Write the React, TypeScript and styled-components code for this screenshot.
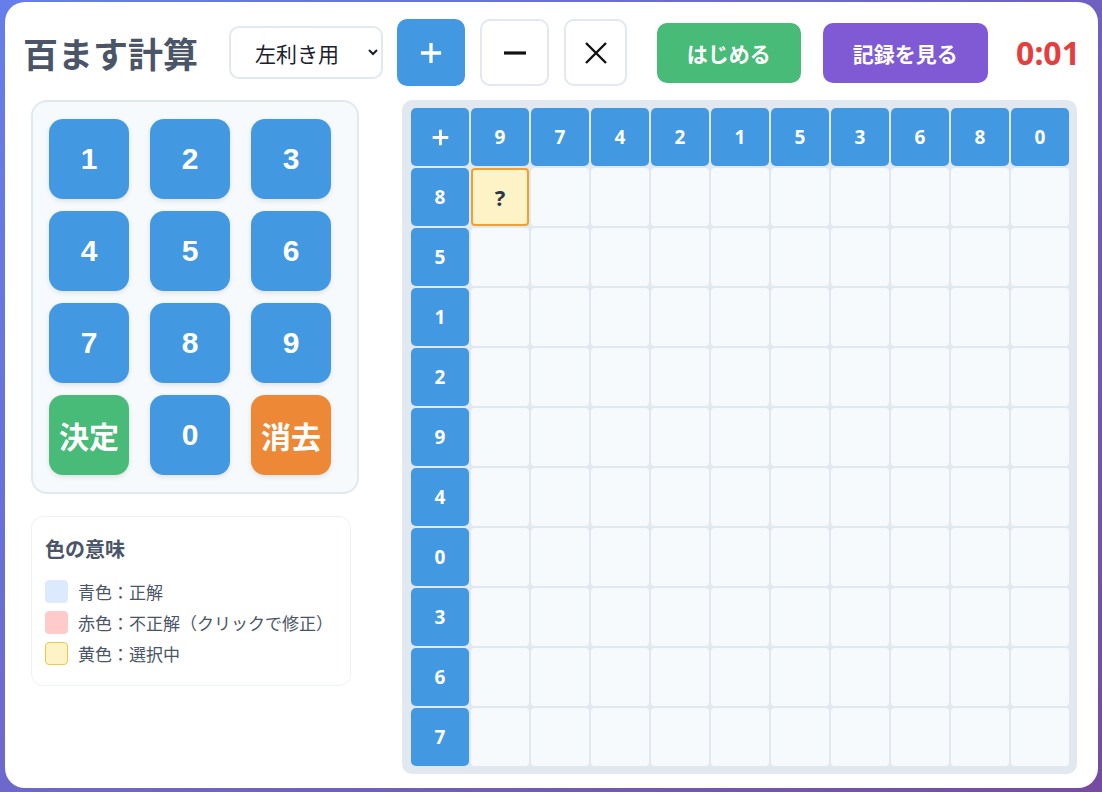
import { Fragment } from 'react';
import styled, { createGlobalStyle } from 'styled-components';

const GlobalStyle = createGlobalStyle`
  html, body {
    margin: 0;
    padding: 0;
  }
  body {
    background: linear-gradient(135deg, #667eea 0%, #764ba2 100%);
    font-family: 'Noto Sans CJK JP', 'Noto Sans', sans-serif;
    height: 792px;
    overflow: hidden;
  }
`;

const blue = '#4299e1';
const border = '#e2e8f0';
const textColor = '#4a5568';

const Page = styled.div`
  padding: 2px 4px 4px 5px;
  box-sizing: border-box;
  height: 792px;
`;

const Card = styled.div`
  background: #ffffff;
  border-radius: 20px;
  height: 100%;
  box-sizing: border-box;
  padding: 17px 18px 0 18px;
`;

const Header = styled.header`
  display: flex;
  align-items: center;
  height: 67px;
`;

const Title = styled.h1`
  margin: 0 31px 0 0;
  font-size: 35px;
  font-weight: 700;
  color: ${textColor};
  line-height: 1;
  white-space: nowrap;
`;

const Select = styled.select`
  width: 154px;
  height: 53px;
  border: 2px solid ${border};
  border-radius: 10px;
  background: #fff;
  font-family: 'Noto Sans CJK JP', sans-serif;
  font-size: 21px;
  color: #1a202c;
  padding: 0 12px 0 20px;
  margin-right: 14px;
`;

const OpButton = styled.button<{ $active?: boolean; $width: number }>`
  width: ${(p) => p.$width}px;
  height: 67px;
  margin-right: 15px;
  border-radius: 10px;
  border: 2px solid ${(p) => (p.$active ? blue : border)};
  background: ${(p) => (p.$active ? blue : '#fff')};
  color: ${(p) => (p.$active ? '#fff' : '#111')};
  display: flex;
  align-items: center;
  justify-content: center;
  padding: 0;
`;

const ActionButton = styled.button<{ $color: string; $gap: number; $width: number }>`
  width: ${(p) => p.$width}px;
  height: 60px;
  padding: 0;
  border: none;
  border-radius: 10px;
  background: ${(p) => p.$color};
  color: #fff;
  font-family: 'Noto Sans CJK JP', sans-serif;
  font-size: 21px;
  font-weight: 700;
  margin-left: ${(p) => p.$gap}px;
`;

const Timer = styled.div`
  margin-left: 28px;
  font-family: 'Noto Sans', sans-serif;
  font-size: 32px;
  font-weight: 700;
  color: #e53e3e;
`;

const Main = styled.main`
  display: flex;
  margin-top: 14px;
  padding-left: 8px;
`;

const Side = styled.div`
  width: 328px;
  display: flex;
  flex-direction: column;
  gap: 22px;
  margin-right: 43px;
`;

const Keypad = styled.div`
  background: #f7fafc;
  border: 2px solid ${border};
  border-radius: 16px;
  padding: 17px 16px 17px 16px;
  display: grid;
  grid-template-columns: repeat(3, 80px);
  column-gap: 21px;
  row-gap: 12px;
`;

const Key = styled.button<{ $color?: string }>`
  width: 80px;
  height: 80px;
  border: none;
  border-radius: 14px;
  background: ${(p) => p.$color || blue};
  color: #fff;
  font-family: 'Liberation Sans', 'Noto Sans CJK JP', sans-serif;
  font-size: 30px;
  font-weight: 700;
  box-shadow: 0 2px 5px rgba(0, 0, 0, 0.1);
  padding: 0;
`;

const Legend = styled.div`
  width: 320px;
  box-sizing: border-box;
  border: 1px solid #edf2f7;
  border-radius: 12px;
  padding: 17px 13px 16px;
`;

const LegendTitle = styled.h3`
  margin: 0 0 13px;
  font-size: 20px;
  font-weight: 700;
  color: ${textColor};
`;

const LegendRow = styled.div`
  display: flex;
  align-items: center;
  gap: 10px;
  height: 31px;
  font-size: 17px;
  color: ${textColor};
`;

const Swatch = styled.span<{ $bg: string; $border: string }>`
  width: 23px;
  height: 23px;
  border-radius: 4px;
  background: ${(p) => p.$bg};
  border: 1px solid ${(p) => p.$border};
  box-sizing: border-box;
`;

const Board = styled.div`
  background: ${border};
  border-radius: 10px;
  padding: 8px 8px 8px 9px;
  display: grid;
  grid-template-columns: repeat(11, 58px);
  grid-auto-rows: 58px;
  gap: 2px;
`;

const HeadCell = styled.div`
  background: ${blue};
  border-radius: 5px;
  color: #fff;
  font-family: 'Noto Sans', sans-serif;
  font-size: 19px;
  font-weight: 700;
  display: flex;
  align-items: center;
  justify-content: center;
`;

const Cell = styled.div<{ $selected?: boolean }>`
  background: ${(p) => (p.$selected ? '#fef3c7' : '#f7fafc')};
  border: ${(p) => (p.$selected ? '2px solid #f0a12c' : 'none')};
  border-radius: 4px;
  box-sizing: border-box;
  color: #2d3748;
  font-family: 'Noto Sans', sans-serif;
  font-size: 22px;
  font-weight: 700;
  display: flex;
  align-items: center;
  justify-content: center;
`;

const cols = [9, 7, 4, 2, 1, 5, 3, 6, 8, 0];
const rows = [8, 5, 1, 2, 9, 4, 0, 3, 6, 7];

const PlusIcon = ({ size, stroke }: { size: number; stroke: number }) => (
  <svg width={size} height={size} viewBox="0 0 24 24">
    <path d="M12 1v22M1 12h22" stroke="#fff" strokeWidth={stroke} />
  </svg>
);

const MinusIcon = () => (
  <svg width="24" height="24" viewBox="0 0 24 24">
    <path d="M1 12h22" stroke="#111" strokeWidth="3.2" />
  </svg>
);

const TimesIcon = () => (
  <svg width="24" height="24" viewBox="0 0 24 24">
    <path d="M2 2l20 20M22 2L2 22" stroke="#111" strokeWidth="2.4" />
  </svg>
);

export default function App() {
  return (
    <Page>
      <GlobalStyle />
      <Card>
        <Header>
          <Title>百ます計算</Title>
          <Select defaultValue="left">
            <option value="right">右利き用</option>
            <option value="left">左利き用</option>
          </Select>
          <OpButton $active $width={69}>
            <PlusIcon size={22} stroke={3.6} />
          </OpButton>
          <OpButton $width={69}>
            <MinusIcon />
          </OpButton>
          <OpButton $width={63}>
            <TimesIcon />
          </OpButton>
          <ActionButton $color="#48bb78" $gap={15} $width={144}>
            はじめる
          </ActionButton>
          <ActionButton $color="#805ad5" $gap={22} $width={166}>
            記録を見る
          </ActionButton>
          <Timer>0:01</Timer>
        </Header>

        <Main>
          <Side>
            <Keypad>
              {[1, 2, 3, 4, 5, 6, 7, 8, 9].map((n) => (
                <Key key={n}>{n}</Key>
              ))}
              <Key $color="#48bb78">決定</Key>
              <Key>0</Key>
              <Key $color="#ed8936">消去</Key>
            </Keypad>

            <Legend>
              <LegendTitle>色の意味</LegendTitle>
              <LegendRow>
                <Swatch $bg="#dbeafe" $border="#dbeafe" />
                青色：正解
              </LegendRow>
              <LegendRow>
                <Swatch $bg="#fecaca" $border="#fecaca" />
                赤色：不正解（クリックで修正）
              </LegendRow>
              <LegendRow>
                <Swatch $bg="#fef3c7" $border="#ecc94b" />
                黄色：選択中
              </LegendRow>
            </Legend>
          </Side>

          <Board>
            <HeadCell>
              <PlusIcon size={17} stroke={4} />
            </HeadCell>
            {cols.map((c, i) => (
              <HeadCell key={'c' + i}>{c}</HeadCell>
            ))}
            {rows.map((r, ri) => (
              <Fragment key={'r' + ri}>
                <HeadCell>{r}</HeadCell>
                {cols.map((_, ci) => (
                  <Cell key={ci} $selected={ri === 0 && ci === 0}>
                    {ri === 0 && ci === 0 ? '?' : ''}
                  </Cell>
                ))}
              </Fragment>
            ))}
          </Board>
        </Main>
      </Card>
    </Page>
  );
}
